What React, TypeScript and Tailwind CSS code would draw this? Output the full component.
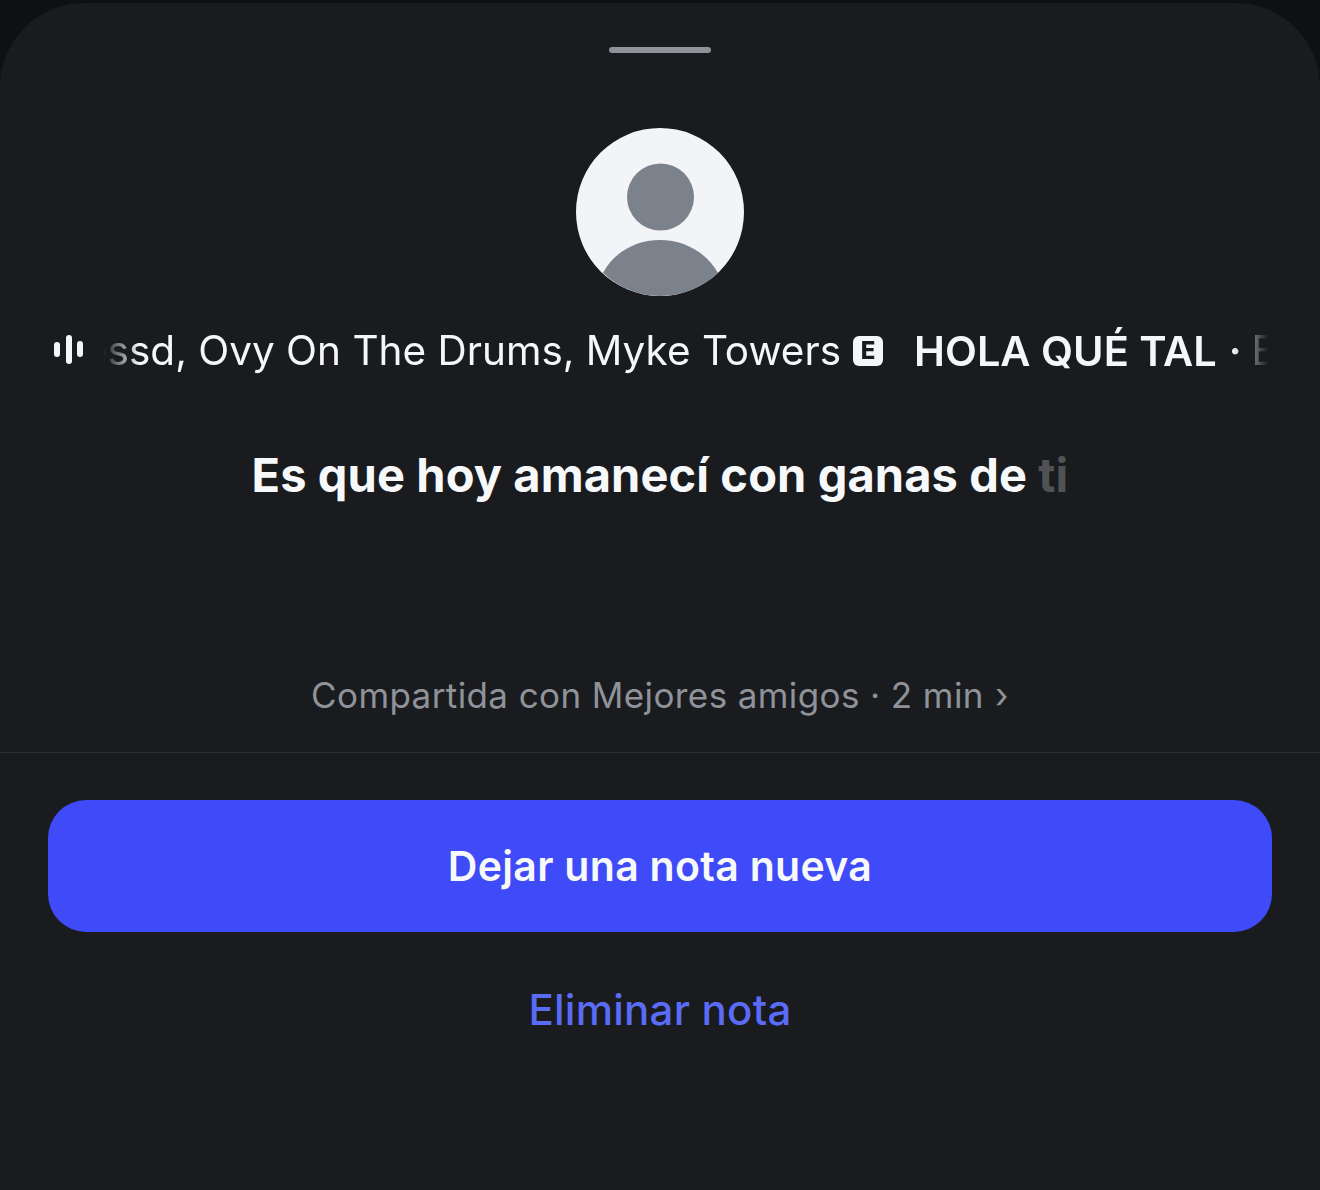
const App = () => {
  return (
    <div className="h-[1190px] w-[1320px] overflow-hidden bg-[#0e1114] pt-[3px] font-['Inter',sans-serif]">
      <div className="flex h-[1187px] flex-col items-center rounded-t-[84px] bg-[#191b1f]">
        <div className="mt-[44px] h-[6px] w-[102px] rounded-full bg-[#8f9298]"></div>

        <div className="mt-[75px] h-[168px] w-[168px]">
          <svg viewBox="0 0 168 168" className="h-full w-full">
            <circle cx="84" cy="84" r="84" fill="#f2f4f7" />
            <circle cx="84.5" cy="69" r="33.5" fill="#7c828b" />
            <path d="M27 145 C38 124 60 112 84 112 C108 112 130 124 142 145 C127 159 106 168 84 168 C62 168 42 159 27 145 Z" fill="#7c828b" />
          </svg>
        </div>

        <div className="mt-[28px] flex h-[52px] w-[1216px] items-center">
          <svg viewBox="0 0 30 30" className="ml-[2px] h-[30px] w-[30px] shrink-0" fill="#f5f6f8">
            <rect x="0" y="7" width="6" height="15" rx="3" />
            <rect x="12" y="0" width="6" height="29" rx="3" />
            <rect x="23" y="6" width="6" height="16" rx="3" />
          </svg>
          <div className="ml-[19px] flex h-[52px] w-[1165px] items-center overflow-hidden whitespace-nowrap text-[40.5px] leading-[48px] text-[#f5f6f8] [mask-image:linear-gradient(to_right,transparent,black_36px,black_1130px,transparent)]">
            <div className="ml-[-19px] mt-[2px] flex shrink-0 items-center">
              <span>essd, Ovy On The Drums, Myke Towers</span>
              <span className="ml-[12px] flex h-[30px] w-[30px] items-center justify-center rounded-[6px] bg-[#f5f6f8] text-[24px] font-extrabold leading-none text-[#191b1f]">
                E
              </span>
              <span className="ml-[31px] text-[41.5px] font-semibold">HOLA QUÉ TAL</span>
              <span className="ml-[12px] font-semibold">·</span>
              <span className="ml-[10px]">Bad</span>
            </div>
          </div>
        </div>

        <p className="mt-[71px] whitespace-nowrap text-[47px] font-bold leading-[56px] tracking-[0.1px] text-[#f7f8fa]">
          Es que hoy amanecí con ganas de <span className="text-[#515256]">ti</span>
        </p>

        <p className="mt-[170px] whitespace-nowrap text-[35px] leading-[44px] tracking-[0.4px] text-[#8f9399]">
          Compartida con Mejores amigos · 2 min <span className="ml-[1px]">›</span>
        </p>

        <div className="mt-[35px] h-px w-full bg-[#2c2d31]"></div>

        <button className="mt-[47px] h-[132px] w-[1224px] rounded-[38px] bg-[#3f4bf8] pt-[2px] text-[41px] font-semibold tracking-[0.3px] text-[#f7f8fa]">
          Dejar una nota nueva
        </button>

        <p className="mt-[53px] text-[42px] font-medium leading-[50px] tracking-[0.25px] text-[#5a6cf5]">Eliminar nota</p>
      </div>
    </div>
  );
};

export default App;
